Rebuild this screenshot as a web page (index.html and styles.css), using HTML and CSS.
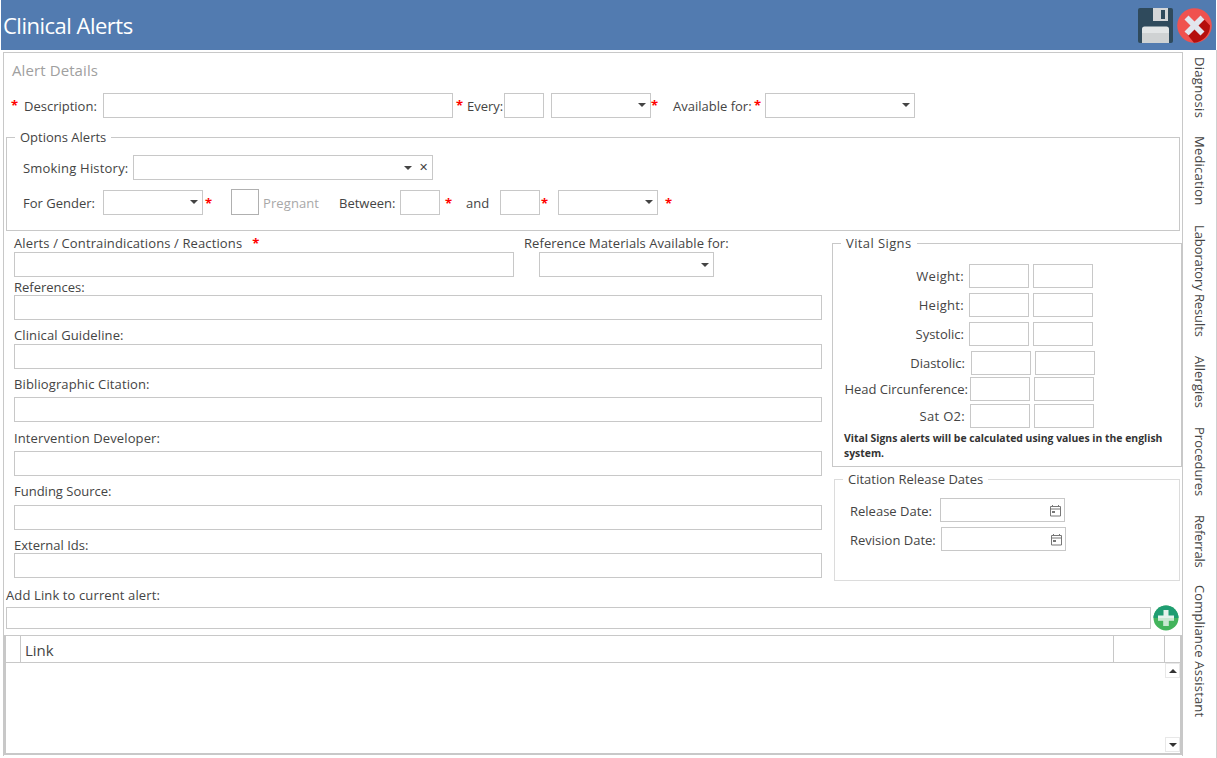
FILE: index.html
```html
<!DOCTYPE html>
<html lang="en">
<head>
<meta charset="utf-8">
<title>Clinical Alerts</title>
<link rel="stylesheet" href="styles.css">
</head>
<body>
<div class="app">
  <header class="topbar">
    <h1 class="app-title">Clinical Alerts</h1>
    <div class="top-actions">
      <svg class="icon-save" viewBox="0 0 35 35" width="35" height="35" aria-label="Save">
        <rect x="0" y="0" width="35" height="35" rx="2" fill="#2f4a5c"/>
        <rect x="15" y="0" width="15" height="13" fill="#d4d6d8"/>
        <rect x="23" y="2" width="4" height="9" fill="#2f4a5c"/>
        <path d="M4 35V21a2.500 2.500 0 0 1 2.500-2.500h22a2.500 2.500 0 0 1 2.500 2.500v14z" fill="#e2e5e6"/>
        <rect x="4" y="25" width="27" height="10" fill="#cfd2d3"/>
      </svg>
      <svg class="icon-close" viewBox="0 0 35 35" width="35" height="35" aria-label="Close">
        <circle cx="17.500" cy="17.500" r="17.300" fill="#f0524f"/>
        <path d="M9 25 L25 9 L33 17.500 A17.300 17.300 0 0 1 17 34.800z" fill="#b50f0c"/>
        <path d="M11.500 7.500 L17.500 13.500 L23.500 7.500 L27.500 11.500 L21.500 17.500 L27.500 23.500 L23.500 27.500 L17.500 21.500 L11.500 27.500 L7.500 23.500 L13.500 17.500 L7.500 11.500z" fill="#e2e6ee"/>
      </svg>
    </div>
  </header>

  <div class="workspace">
    <main class="panel">
      <h2 class="panel-title">Alert Details</h2>

      <div class="row row-details">
        <span class="star star-first">*</span>
        <label class="lbl lbl-desc">Description:</label>
        <input class="box w350" type="text">
        <span class="star star-every">*</span>
        <label class="lbl lbl-every">Every:</label>
        <input class="box w40 ml-1" type="text">
        <div class="box select w100 ml-7"><span class="caret"></span></div>
        <span class="star">*</span>
        <label class="lbl lbl-avail">Available for:</label>
        <span class="star star-avail">*</span>
        <div class="box select w150"><span class="caret"></span></div>
      </div>

      <fieldset class="group group-options">
        <legend class="legend">Options Alerts</legend>
        <div class="row">
          <label class="lbl lbl-smoke">Smoking History:</label>
          <div class="box select select-clear w300">
            <span class="caret"></span>
            <span class="clear">✕</span>
          </div>
        </div>
        <div class="row row-gender">
          <label class="lbl lbl-gender">For Gender:</label>
          <div class="box select w100"><span class="caret"></span></div>
          <span class="star star-gender">*</span>
          <span class="check"></span>
          <label class="lbl lbl-preg">Pregnant</label>
          <label class="lbl lbl-between">Between:</label>
          <input class="box w40" type="text">
          <span class="star star-b1">*</span>
          <label class="lbl lbl-and">and</label>
          <input class="box w40" type="text">
          <span class="star star-b2">*</span>
          <div class="box select w100 ml-10"><span class="caret"></span></div>
          <span class="star star-b3">*</span>
        </div>
      </fieldset>

      <div class="columns">
        <div class="col-left">
          <div class="row-top">
            <div class="top-main">
              <label class="lbl field-label"><span class="wide">Alerts / Contraindications / Reactions</span><span class="star star-alerts">*</span></label>
              <input class="box w500" type="text">
            </div>
            <div class="top-ref">
              <label class="lbl field-label ref-label">Reference Materials Available for:</label>
              <div class="box select w175 ml-15"><span class="caret"></span></div>
            </div>
          </div>
          <label class="lbl field-label short mt-1">References:</label>
          <input class="box full" type="text">
          <label class="lbl field-label mt-6 wide">Clinical Guideline:</label>
          <input class="box full" type="text">
          <label class="lbl field-label mt-6 mb-4 wide">Bibliographic Citation:</label>
          <input class="box full" type="text">
          <label class="lbl field-label mt-7 mb-4 wide">Intervention Developer:</label>
          <input class="box full" type="text">
          <label class="lbl field-label mt-6 mb-5">Funding Source:</label>
          <input class="box full" type="text">
          <label class="lbl field-label short mt-6">External Ids:</label>
          <input class="box full" type="text">
        </div>

        <div class="col-right">
          <fieldset class="group group-vitals">
            <legend class="legend legend-wide">Vital Signs</legend>
            <div class="vital"><label class="lbl v-label v-wide">Weight:</label><input class="box w60" type="text"><input class="box w60" type="text"></div>
            <div class="vital"><label class="lbl v-label v-wide">Height:</label><input class="box w60" type="text"><input class="box w60" type="text"></div>
            <div class="vital"><label class="lbl v-label">Systolic:</label><input class="box w60" type="text"><input class="box w60" type="text"></div>
            <div class="vital"><label class="lbl v-label v-dia">Diastolic:</label><input class="box w60" type="text"><input class="box w60" type="text"></div>
            <div class="vital v-tight"><label class="lbl v-label v-head">Head Circunference:</label><input class="box w60" type="text"><input class="box w60" type="text"></div>
            <div class="vital v-tight2"><label class="lbl v-label v-sat v-wide">Sat O2:</label><input class="box w60" type="text"><input class="box w60" type="text"></div>
            <p class="note">Vital Signs alerts will be calculated using values in the english system.</p>
          </fieldset>

          <fieldset class="group group-citation">
            <legend class="legend">Citation Release Dates</legend>
            <div class="date-row">
              <label class="lbl d-label">Release Date:</label>
              <div class="box date">
                <svg class="cal" viewBox="0 0 13 13" width="13" height="13"><path d="M1.500 2.500h10v9.500h-10zM1.500 5h10M3.500 1v2M9.500 1v2" fill="none" stroke="#777"/><rect x="3" y="7" width="3" height="2" fill="#777"/></svg>
              </div>
            </div>
            <div class="date-row">
              <label class="lbl d-label d-rev">Revision Date:</label>
              <div class="box date">
                <svg class="cal" viewBox="0 0 13 13" width="13" height="13"><path d="M1.500 2.500h10v9.500h-10zM1.500 5h10M3.500 1v2M9.500 1v2" fill="none" stroke="#777"/><rect x="3" y="7" width="3" height="2" fill="#777"/></svg>
              </div>
            </div>
          </fieldset>
        </div>
      </div>

      <label class="lbl link-label">Add Link to current alert:</label>
      <div class="link-row">
        <input class="box link-input" type="text">
        <svg class="icon-add" viewBox="0 0 26 26" width="26" height="26" aria-label="Add">
          <circle cx="13" cy="13" r="12.500" fill="#43b45c"/>
          <path d="M.5 13a12.500 12.500 0 0 1 25 0z" fill="#1f9d72"/>
          <path d="M10.500 5h5v5.500H21v5h-5.500V21h-5v-5.500H5v-5h5.500z" fill="#e6f3ec"/>
          <path d="M5 13h16v2.500h-5.500V21h-5v-5.500H5z" fill="#c9e8d2"/>
        </svg>
      </div>

      <section class="grid">
        <div class="grid-head">
          <div class="gh gh-a"></div>
          <div class="gh gh-link">Link</div>
          <div class="gh gh-b"></div>
          <div class="gh gh-c"></div>
        </div>
        <div class="grid-body">
          <div class="scroller">
            <span class="sbtn"><span class="tri tri-up"></span></span>
            <span class="sbtn"><span class="tri tri-down"></span></span>
          </div>
        </div>
      </section>
    </main>

    <nav class="tabs">
      <span class="tab tab-diag">Diagnosis</span>
      <span class="tab tab-med">Medication</span>
      <span class="tab tab-lab">Laboratory Results</span>
      <span class="tab tab-all">Allergies</span>
      <span class="tab tab-proc">Procedures</span>
      <span class="tab tab-ref">Referrals</span>
      <span class="tab tab-comp">Compliance Assistant</span>
    </nav>
  </div>
</div>
</body>
</html>
```

FILE: styles.css
```css
* { box-sizing: border-box; }
html, body { margin: 0; padding: 0; background: #fff; }
body {
  width: 1217px;
  height: 758px;
  overflow: hidden;
  font-family: "Open Sans", "Noto Sans", "Liberation Sans", sans-serif;
  font-size: 13px;
  color: #444;
}
.app { width: 1217px; height: 758px; display: flex; flex-direction: column; }

.topbar {
  margin: 0 1px;
  height: 50px;
  flex: none;
  background: #527bb0;
  display: flex;
  align-items: center;
  justify-content: space-between;
  padding-right: 4px;
}
.app-title { margin: 0 0 0 2px; font-size: 22px; font-weight: 400; color: #fff; line-height: 54px; letter-spacing: -.5px; }
.top-actions { display: flex; gap: 4px; align-items: flex-start; height: 50px; }
.icon-save { margin-top: 8px; }
.icon-close { margin-top: 8px; }

.workspace { display: flex; flex: 1; border-right: 1px solid #d0d0d0; }
.panel {
  margin: 2px 0 2px 3px;
  width: 1180px;
  height: 704px;
  border: 1px solid #c8c8c8;
  border-bottom: 0;
}
.panel-title { margin: 0; height: 34px; padding: 8px 0 0 8px; font-size: 15px; line-height: 18px; font-weight: 400; color: #a0a0a0; letter-spacing: .1px; }

.row { display: flex; align-items: center; }
.row-details { margin-top: 5px; height: 26px; }
.row-gender { margin-top: 9px; height: 26px; }
.row-details .lbl, .row-gender .lbl { padding-top: 2px; }
.row-gender .star { margin-top: 2px; }

.lbl { white-space: nowrap; line-height: 18px; }
.wide { letter-spacing: .12px; }
.box { display: block; height: 25px; border: 1px solid #c8c8c8; background: #fff; margin: 0; padding: 0; border-radius: 0; outline: 0; flex: none; }
.w40 { width: 40px; }
.w60 { width: 60px; height: 24px; }
.w100 { width: 100px; }
.w150 { width: 150px; }
.w175 { width: 175px; }
.w300 { width: 300px; }
.w350 { width: 350px; }
.w500 { width: 500px; }
.full { width: 808px; }
.ml-1 { margin-left: 1px; }
.ml-7 { margin-left: 7px; }
.ml-10 { margin-left: 11px; }
.ml-15 { margin-left: 15px; }

.select { display: flex; align-items: center; justify-content: flex-end; padding-right: 4px; }
.select-clear { padding-right: 3px; }
.caret { width: 0; height: 0; border-left: 4px solid transparent; border-right: 4px solid transparent; border-top: 4px solid #444; }
.clear { width: 10px; font-size: 11px; line-height: 12px; margin-left: 7px; color: #444; font-family: "DejaVu Sans", sans-serif; }

.star { color: #f00; font-weight: 700; font-size: 13px; width: 6px; line-height: 14px; flex: none; display: inline-block; }
.star-first { margin-left: 7px; }
.lbl-desc { margin-left: 7px; width: 79px; }
.star-every { margin-left: 3px; }
.lbl-every { margin-left: 5px; width: 36px; }
.lbl-avail { margin-left: 16px; width: 81px; }
.star-avail { margin-right: 5px; }

.group { margin: 0; padding: 0; border: 1px solid #c8c8c8; min-width: 0; }
.legend { padding: 0 5px; margin-left: 8px; line-height: 18px; white-space: nowrap; }
.legend-wide { letter-spacing: .4px; }
.group-options { margin: 10px 0 0 2px; width: 1174px; height: 103px; padding-top: 9px; }
.lbl-smoke { margin-left: 16px; width: 110px; letter-spacing: .2px; }
.lbl-gender { margin-left: 16px; width: 80px; }
.star-gender { margin-left: 2px; }
.check { width: 28px; height: 26px; margin-left: 20px; border: 1px solid #b0b0b0; flex: none; }
.lbl-preg { margin-left: 4px; width: 76px; color: #a8a8a8; letter-spacing: .1px; }
.lbl-between { width: 61px; }
.star-b1 { margin-left: 5px; }
.lbl-and { margin-left: 15px; width: 34px; }
.star-b2 { margin-left: 1px; }
.star-b3 { margin-left: 7px; }

.columns { display: flex; margin-top: 3px; }
.col-left { width: 808px; margin-left: 10px; display: flex; flex-direction: column; }
.col-right { width: 350px; margin-left: 10px; }
.row-top { display: flex; }
.top-main { width: 510px; }
.field-label { display: block; height: 18px; }
.ref-label { letter-spacing: .06px; }
.short { height: 17px; }
.star-alerts { margin-left: 10px; }
.mt-1 { margin-top: 1px; }
.mt-6 { margin-top: 6px; }
.mt-7 { margin-top: 7px; }
.mb-4 { margin-bottom: 4px; }
.mb-5 { margin-bottom: 5px; }

.group-vitals { width: 350px; height: 233px; padding: 12px 0 0 0; }
.vital { display: flex; align-items: center; margin-bottom: 5px; gap: 4px; height: 24px; }
.v-tight { margin-top: -3px; margin-bottom: 3px; }
.v-tight2 { margin-bottom: 3px; }
.v-label { width: 131px; text-align: right; flex: none; margin-right: 1px; }
.v-wide { letter-spacing: .3px; }
.v-dia { width: 132px; margin-right: 2px; }
.v-head { width: 135px; margin-right: -2px; }
.v-sat { width: 132px; margin-right: 1px; }
.note { margin: 0 8px 0 11px; font-size: 10.400px; line-height: 15px; font-weight: 700; color: #333; }

.group-citation { margin: 3px 0 0 2px; width: 346px; height: 111px; padding: 10px 0 0 0; border-color: #dcdcdc; }
.date-row { display: flex; align-items: center; margin-bottom: 5px; height: 24px; }
.d-label { margin-left: 15px; width: 90px; padding-top: 2px; }
.d-rev { width: 91px; }
.date { width: 125px; height: 24px; display: flex; align-items: center; justify-content: flex-end; padding-right: 2px; }
.cal { display: block; }

.link-label { display: block; margin: 5px 0 3px 2px; letter-spacing: .12px; }
.link-row { display: flex; align-items: center; margin-left: 2px; height: 22px; }
.link-input { width: 1145px; height: 22px; }
.icon-add { margin-left: 2px; flex: none; }

.grid { margin: 6px 0 0 0; width: 1178px; height: 120px; border: 1px solid #c8c8c8; border-left-width: 2px; border-bottom-width: 2px; border-right-width: 2px; display: flex; flex-direction: column; }
.grid-head { display: flex; height: 27px; border-bottom: 1px solid #c8c8c8; flex: none; }
.gh { border-right: 1px solid #c8c8c8; }
.gh-a { width: 15px; }
.gh-link { width: 1093px; padding-left: 4px; font-size: 15px; line-height: 28px; }
.gh-b { width: 51px; }
.gh-c { flex: 1; border-right: 0; }
.grid-body { flex: 1; display: flex; justify-content: flex-end; }
.scroller { width: 15px; display: flex; flex-direction: column; justify-content: space-between; padding: 0 0 1px; }
.sbtn { width: 15px; height: 15px; border: 1px solid #e8e8e8; display: flex; align-items: center; justify-content: center; }
.tri { width: 0; height: 0; border-left: 4px solid transparent; border-right: 4px solid transparent; }
.tri-up { border-bottom: 4px solid #333; }
.tri-down { border-top: 4px solid #333; }

.tabs { flex: 1; display: flex; flex-direction: column; align-items: center; padding-top: 7px; gap: 19px; }
.tab { writing-mode: vertical-rl; font-size: 13px; line-height: 18px; white-space: nowrap; color: #444; }
.tab-diag { height: 60px; letter-spacing: .3px; }
.tab-med { height: 70px; letter-spacing: .2px; }
.tab-lab { height: 112px; letter-spacing: -.1px; }
.tab-all { height: 52px; letter-spacing: .1px; }
.tab-proc { height: 69px; }
.tab-ref { height: 51px; letter-spacing: -.2px; }
.tab-comp { height: 131px; letter-spacing: .15px; }
```
